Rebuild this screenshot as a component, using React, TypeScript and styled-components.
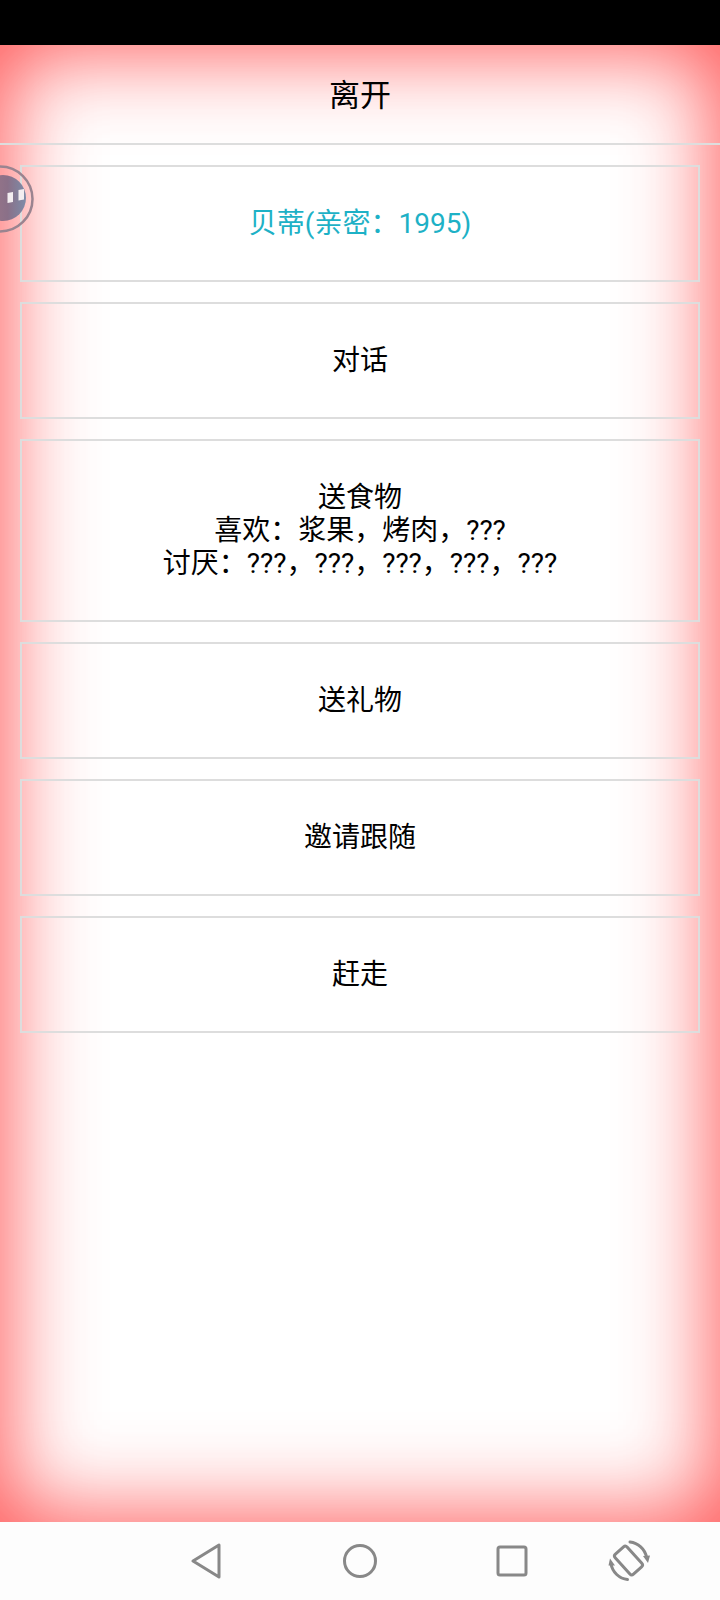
import React from "react";
import styled, { createGlobalStyle } from "styled-components";

const GlobalStyle = createGlobalStyle`
  html, body {
    margin: 0;
    padding: 0;
    background: #fff;
  }
  * {
    box-sizing: border-box;
  }
`;

const Screen = styled.div`
  width: 720px;
  height: 1600px;
  display: flex;
  flex-direction: column;
  font-family: Roboto, "Noto Sans CJK SC", sans-serif;
  color: #000;
  overflow: hidden;
`;

const StatusBar = styled.div`
  height: 45px;
  flex: none;
  background: #000;
`;

const Main = styled.div`
  position: relative;
  flex: 1;
  background: #fff;
  box-shadow: inset 0 0 85px 8px rgba(255, 70, 70, 0.9);
`;

const Header = styled.div`
  height: 100px;
  padding-bottom: 4px;
  display: flex;
  align-items: center;
  justify-content: center;
  border-bottom: 2px solid #ddd;
  font-size: 31px;
`;

const List = styled.div`
  display: flex;
  flex-direction: column;
  gap: 20px;
  padding: 20px 20px 0;
`;

const Card = styled.div<{ $tall?: boolean; $accent?: boolean }>`
  height: ${(p) => (p.$tall ? "183px" : "117px")};
  display: flex;
  align-items: center;
  justify-content: center;
  border: 2px solid #ddd;
  font-size: 28px;
  line-height: 33px;
  text-align: center;
  white-space: pre-line;
  color: ${(p) => (p.$accent ? "#1db1c6" : "#000")};
`;

const Bubble = styled.svg`
  position: absolute;
  left: 0;
  top: 120px;
`;

const NavBar = styled.div`
  height: 78px;
  flex: none;
  background: #fdfdfd;
  display: grid;
  grid-template-columns: 152px 153px 112px 42px;
  align-items: center;
  padding-left: 191px;
`;

const NavIcon = styled.svg`
  display: block;
  fill: none;
  stroke: #888;
  stroke-width: 3;
  stroke-linejoin: round;
  stroke-linecap: round;
`;

const Tip = styled.path`
  fill: #888;
  stroke: none;
`;

const food = "送食物\n喜欢：浆果，烤肉，???\n讨厌：???，???，???，???，???";

export default function App() {
  return (
    <>
      <GlobalStyle />
      <Screen>
        <StatusBar />
        <Main>
          <Header>离开</Header>
          <List>
            <Card $accent>贝蒂(亲密：1995)</Card>
            <Card>对话</Card>
            <Card $tall>{food}</Card>
            <Card>送礼物</Card>
            <Card>邀请跟随</Card>
            <Card>赶走</Card>
          </List>
          <Bubble width="36" height="70" viewBox="0 0 36 70">
            <defs>
              <linearGradient id="face" x1="0" x2="1" y1="0" y2="0">
                <stop offset="0" stopColor="#a27888" />
                <stop offset="0.6" stopColor="#8a7088" />
                <stop offset="1" stopColor="#7d8ca8" />
              </linearGradient>
            </defs>
            <circle cx="0" cy="34" r="32.5" fill="none" stroke="#9a8490" strokeWidth="2.5" />
            <circle cx="3" cy="33" r="23" fill="url(#face)" />
            <path d="M7.5 28 L13 27 V37 L7.5 38 Z" fill="#f3eef0" />
            <path d="M18.5 25 L24 24 V34.5 L18.5 35.5 Z" fill="#f3eef0" />
          </Bubble>
        </Main>
        <NavBar>
          <NavIcon width="32" height="36" viewBox="0 0 32 36">
            <path d="M2 18 L28 2 V34 Z" />
          </NavIcon>
          <NavIcon width="34" height="36" viewBox="0 0 34 36">
            <circle cx="17" cy="18" r="15.5" />
          </NavIcon>
          <NavIcon width="32" height="32" viewBox="0 0 32 32">
            <rect x="2" y="2" width="28" height="28" rx="2" />
          </NavIcon>
          <NavIcon width="42" height="42" viewBox="0 0 42 42">
            <rect x="12.5" y="7" width="16" height="27" rx="2.5" transform="rotate(-42 20.5 20.5)" />
            <path d="M22 2 A19 19 0 0 1 38.5 17" />
            <path d="M19.5 39.5 A19 19 0 0 1 3 24" />
            <Tip d="M35 16 L42 15.5 L40 23 Z" />
            <Tip d="M0.5 25.5 L7 25.5 L2 18.5 Z" />
          </NavIcon>
        </NavBar>
      </Screen>
    </>
  );
}
